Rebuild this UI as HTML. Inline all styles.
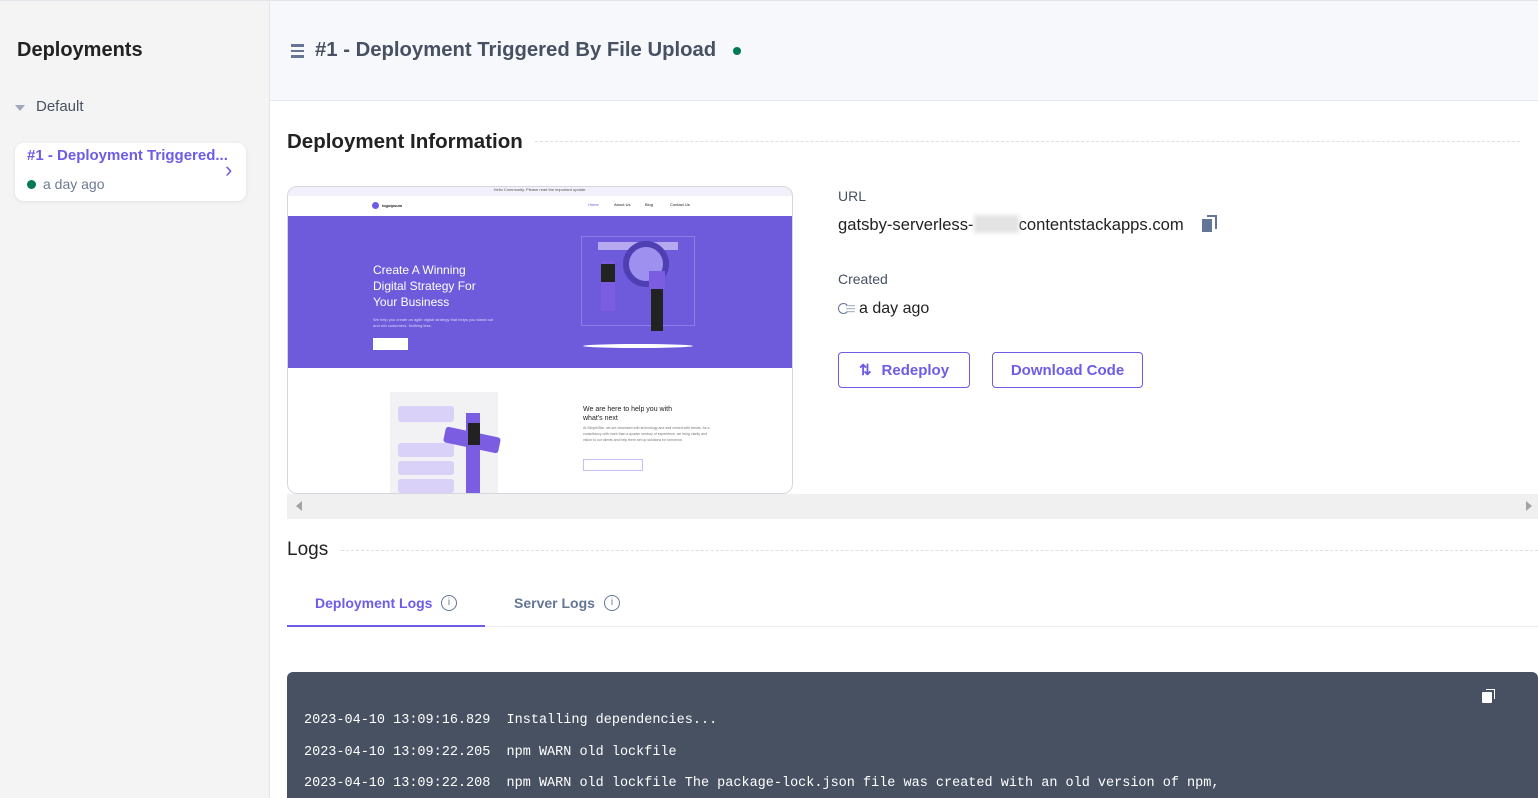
<!DOCTYPE html>
<html><head><meta charset="utf-8"><style>
*{box-sizing:border-box;margin:0;padding:0}
body{width:1538px;height:798px;overflow:hidden;font-family:"Liberation Sans",sans-serif;background:#fff;position:relative;color:#222}
.abs{position:absolute}
#side{left:0;top:0;width:270px;height:798px;background:#f4f4f5;border-right:1px solid #e2e4ea;border-top:1px solid #e2e4ea}
#hdr{left:270px;top:0;width:1268px;height:101px;background:#f7f8fc;border-bottom:1px solid #e3e6ef;border-top:1px solid #e2e4ea}
.dash{border-top:1px dashed #dcdfe8;height:0}
.btn{border:1px solid #6c5ce7;border-radius:4px;color:#6c5ce7;font-weight:bold;font-size:15px;display:flex;align-items:center;justify-content:center;background:#fff}
.log{font-family:"Liberation Mono",monospace;font-size:13.5px;color:#fff;left:304px;white-space:pre}
</style></head><body>
<div id="side" class="abs">
  <div class="abs" style="left:17px;top:38px;font-size:20px;font-weight:bold;color:#222">Deployments</div>
  <div class="abs" style="left:15px;top:104px;width:0;height:0;border-left:5px solid transparent;border-right:5px solid transparent;border-top:6px solid #a0a8bb"></div>
  <div class="abs" style="left:36px;top:97px;font-size:15px;color:#475161">Default</div>
  <div class="abs" style="left:15px;top:142px;width:231px;height:58px;background:#fff;border-radius:9px;box-shadow:0 1px 4px rgba(0,0,0,.08)">
    <div class="abs" style="left:12px;top:4px;font-size:15px;font-weight:bold;color:#6c5ce7">#1 - Deployment Triggered...</div>
    <div class="abs" style="left:210px;top:14px;font-size:22px;color:#6c5ce7">&#x203A;</div>
    <div class="abs" style="left:12px;top:37px;width:9px;height:9px;border-radius:50%;background:#007a52"></div>
    <div class="abs" style="left:28px;top:33px;font-size:14px;color:#6e7a92">a day ago</div>
  </div>
</div>
<div id="hdr" class="abs">
  <div class="abs" style="left:21px;top:43px;width:13px">
    <div style="height:2.5px;background:#647696;margin-bottom:3px"></div><div style="height:2.5px;background:#647696;margin-bottom:3px"></div><div style="height:2.5px;background:#647696"></div></div>
  <div class="abs" style="left:45px;top:38px;font-size:20.3px;font-weight:bold;color:#475161">#1 - Deployment Triggered By File Upload</div>
  <div class="abs" style="left:463px;top:46px;width:8px;height:8px;border-radius:50%;background:#007a52"></div>
</div>
<div class="abs" style="left:287px;top:130px;font-size:20.5px;font-weight:bold;color:#222">Deployment Information</div>
<div class="abs dash" style="left:535px;top:141px;width:985px"></div>

<div class="abs" style="left:287px;top:186px;width:506px;height:308px;border:1px solid #d6d6de;border-radius:10px;overflow:hidden;background:#fff">
  <div style="height:9px;background:#f1f0fb;font-size:4px;text-align:center;color:#555">Hello Community. Please read the important update.</div>
  <div style="height:20px;position:relative;font-size:4px">
    <div class="abs" style="left:84px;top:6px;width:7px;height:7px;border-radius:50%;background:#6c5ce7"></div>
    <div class="abs" style="left:94px;top:7px;font-weight:bold">logoipsum</div>
    <div class="abs" style="left:300px;top:6px;color:#6c5ce7">Home</div>
    <div class="abs" style="left:326px;top:6px">About Us</div>
    <div class="abs" style="left:357px;top:6px">Blog</div>
    <div class="abs" style="left:382px;top:6px">Contact Us</div>
  </div>
  <div style="height:152px;background:#6e5bdb;position:relative">
    <div class="abs" style="left:85px;top:46px;color:#fff;font-size:12px;line-height:16px">Create A Winning<br>Digital Strategy For<br>Your Business</div>
    <div class="abs" style="left:85px;top:101px;color:#dcd6ff;font-size:4px;line-height:6px;width:120px">We help you create an agile digital strategy that helps you stand out and win customers. Nothing less.</div>
    <div class="abs" style="left:85px;top:122px;width:35px;height:12px;background:#fff"></div>
    <div class="abs" style="left:293px;top:20px;width:114px;height:90px;border:1px solid #8d7fe6"></div>
    <div class="abs" style="left:310px;top:26px;width:80px;height:8px;background:#b7a9f0"></div>
    <div class="abs" style="left:335px;top:25px;width:46px;height:46px;border:6px solid #4e3fb3;border-radius:50%;background:#9d90ee"></div>
    <div class="abs" style="left:313px;top:45px;width:14px;height:50px;background:#7a5de0"></div>
    <div class="abs" style="left:313px;top:48px;width:14px;height:18px;background:#222"></div>
    <div class="abs" style="left:363px;top:55px;width:12px;height:60px;background:#222"></div>
    <div class="abs" style="left:361px;top:55px;width:16px;height:18px;background:#7a5de0"></div>
    <div class="abs" style="left:295px;top:128px;width:110px;height:4px;border-radius:50%;background:#fff"></div>
  </div>
  <div style="position:relative;height:126px">
    <div class="abs" style="left:102px;top:24px;width:108px;height:102px;background:#f2f2f4"></div>
    <div class="abs" style="left:110px;top:38px;width:56px;height:16px;background:#d9d1f7;border-radius:3px"></div>
    <div class="abs" style="left:110px;top:75px;width:56px;height:14px;background:#d9d1f7;border-radius:3px"></div>
    <div class="abs" style="left:110px;top:93px;width:56px;height:14px;background:#d9d1f7;border-radius:3px"></div>
    <div class="abs" style="left:110px;top:111px;width:56px;height:14px;background:#d9d1f7;border-radius:3px"></div>
    <div class="abs" style="left:156px;top:64px;width:56px;height:16px;background:#7a5de0;border-radius:3px;transform:rotate(12deg)"></div>
    <div class="abs" style="left:178px;top:45px;width:14px;height:80px;background:#7a5de0"></div>
    <div class="abs" style="left:180px;top:55px;width:12px;height:22px;background:#222"></div>
    <div class="abs" style="left:295px;top:37px;font-size:7px;line-height:9px;color:#222">We are here to help you with<br>what's next</div>
    <div class="abs" style="left:295px;top:57px;font-size:3.5px;line-height:6px;width:128px;color:#777">At SimpleSite, we are obsessed with technology and well versed with trends. As a consultancy with more than a quarter century of experience, we bring clarity and vision to our clients and help them set up solutions for tomorrow.</div>
    <div class="abs" style="left:295px;top:91px;width:60px;height:12px;border:1px solid #c7bff3"></div>
  </div>
</div>
<div class="abs" style="left:287px;top:494px;width:1251px;height:25px;background:#f0f0f0"></div>
<div class="abs" style="left:296px;top:501px;width:0;height:0;border-top:5px solid transparent;border-bottom:5px solid transparent;border-right:6px solid #a3a3a3"></div>
<div class="abs" style="left:1526px;top:501px;width:0;height:0;border-top:5px solid transparent;border-bottom:5px solid transparent;border-left:6px solid #a3a3a3"></div>

<div class="abs" style="left:838px;top:188px;font-size:14px;color:#475161">URL</div>
<div class="abs" style="left:838px;top:215px;font-size:16.6px;color:#222;white-space:nowrap">gatsby-serverless-<span style="display:inline-block;width:45px;height:18px;background:#e3e3e3;vertical-align:-3px;filter:blur(2px)"></span>contentstackapps.com</div>
<div class="abs" style="left:1202px;top:219px;width:10px;height:13px;background:#647696"></div>
<div class="abs" style="left:1207px;top:215px;width:10px;height:14px;border-top:2.5px solid #647696;border-right:2.5px solid #647696"></div>
<div class="abs" style="left:838px;top:271px;font-size:14px;color:#475161">Created</div>
<div class="abs" style="left:838px;top:303px;width:11px;height:11px;border:1.5px solid #647696;border-radius:50%;border-right-color:transparent"></div>
<div class="abs" style="left:846px;top:304px;font-size:9px;color:#647696;line-height:3px">&#8212;<br>&#8212;<br>&#8212;</div>
<div class="abs" style="left:859px;top:300px;font-size:16px;color:#222">a day ago</div>
<div class="abs btn" style="left:838px;top:352px;width:132px;height:36px"><span style="font-size:15px;margin-right:10px">&#8645;</span>Redeploy</div>
<div class="abs btn" style="left:992px;top:352px;width:151px;height:36px">Download Code</div>

<div class="abs" style="left:287px;top:539px;font-size:19px;color:#222">Logs</div>
<div class="abs dash" style="left:341px;top:550px;width:1197px"></div>
<div class="abs" style="left:315px;top:595px;font-size:14px;font-weight:bold;color:#6c5ce7">Deployment Logs</div>
<div class="abs" style="left:441px;top:595px;width:16px;height:16px;border:1.5px solid #647696;border-radius:50%;font-size:10px;text-align:center;line-height:13px;color:#647696">i</div>
<div class="abs" style="left:514px;top:595px;font-size:14px;font-weight:bold;color:#647696">Server Logs</div>
<div class="abs" style="left:604px;top:595px;width:16px;height:16px;border:1.5px solid #647696;border-radius:50%;font-size:10px;text-align:center;line-height:13px;color:#647696">i</div>
<div class="abs" style="left:287px;top:626px;width:1251px;height:1px;background:#ececf6"></div>
<div class="abs" style="left:287px;top:625px;width:198px;height:2px;background:#6c5ce7"></div>

<div class="abs" style="left:287px;top:672px;width:1251px;height:126px;background:#475161;border-radius:6px 6px 0 0"></div>
<div class="abs" style="left:1482px;top:692px;width:10px;height:11px;background:#fff;border-radius:1px"></div>
<div class="abs" style="left:1486px;top:689px;width:9px;height:10px;border-top:1.5px solid #fff;border-right:1.5px solid #fff"></div>
<div class="abs log" style="top:713px">2023-04-10 13:09:16.829  Installing dependencies...</div>
<div class="abs log" style="top:745px">2023-04-10 13:09:22.205  npm WARN old lockfile</div>
<div class="abs log" style="top:776px">2023-04-10 13:09:22.208  npm WARN old lockfile The package-lock.json file was created with an old version of npm,</div>
</body></html>
